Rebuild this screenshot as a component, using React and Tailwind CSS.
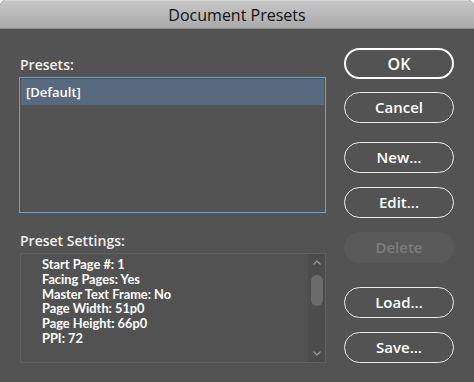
import React from "react";

const font = { fontFamily: '"Open Sans", "Liberation Sans", sans-serif' };
const lato = { fontFamily: 'Lato, "Open Sans", sans-serif' };

function Btn({ children, def, disabled, className = "" }) {
  if (disabled) {
    return (
      <div className={`h-[31px] w-[110px] rounded-full bg-[#595959] flex items-center justify-center text-[15px] font-semibold text-[#7d7d7d] ${className}`}>
        {children}
      </div>
    );
  }
  return (
    <div
      className={`h-[31px] w-[110px] rounded-full flex items-center justify-center text-[15px] font-semibold text-white ${def ? "border-2 border-white" : "border-[1.5px] border-[#ececec]"} ${className}`}
    >
      {children}
    </div>
  );
}

export default function App() {
  const settings = [
    "Start Page #: 1",
    "Facing Pages: Yes",
    "Master Text Frame: No",
    "Page Width: 51p0",
    "Page Height: 66p0",
    "PPI: 72",
  ];
  return (
    <div style={font} className="w-[474px] h-[382px] overflow-hidden bg-[#535353] rounded-t-[6px] flex flex-col">
      <div className="h-[29px] shrink-0 bg-gradient-to-b from-[#c6c6c6] to-[#aaaaaa] border-t border-[#dadada] border-b border-b-[#8e8e8e] flex items-center justify-center text-[16px] text-[#111111]">
        Document Presets
      </div>
      <div className="flex flex-1 pl-[19px] pr-[20px]">
        <div className="w-[307px] flex flex-col">
          <div className="mt-[24px] h-[23px] text-[14px] font-semibold text-[#eeeeee] pl-[1px] leading-[23px]">Presets:</div>
          <div className="mt-[1px] h-[136px] border-[1.5px] border-[#6d9fd6] bg-[#535353] p-[1px]">
            <div className="h-[26px] bg-[#576a80] text-[13px] font-semibold text-white pl-[5px] leading-[26px]">[Default]</div>
          </div>
          <div className="mt-[18px] h-[20px] text-[14px] font-semibold text-[#eeeeee] pl-[1px] leading-[20px]">Preset Settings:</div>
          <div className="mt-[2px] ml-[1px] w-[306px] h-[110px] border border-[#606060] bg-[#525252] flex">
            <div style={lato} className="flex-1 pl-[21px] pt-[3px] text-[12.8px] font-bold text-white leading-[14.8px]">
              {settings.map((s) => (
                <div key={s} className="h-[14.8px]">{s}</div>
              ))}
            </div>
            <div className="w-[17px] bg-[#4c4c4c] flex flex-col items-center justify-between py-[5px]">
              <svg width="10" height="7" viewBox="0 0 10 7"><path d="M1.5 5.5 L5 2 L8.5 5.5" fill="none" stroke="#9a9a9a" strokeWidth="1.2" /></svg>
              <div className="flex-1 w-full flex flex-col items-center pt-[9px]">
                <div className="w-[12px] h-[31px] rounded-full bg-[#6b6b6b]" />
              </div>
              <svg width="10" height="7" viewBox="0 0 10 7"><path d="M1.5 1.5 L5 5 L8.5 1.5" fill="none" stroke="#9a9a9a" strokeWidth="1.2" /></svg>
            </div>
          </div>
        </div>
        <div className="ml-auto w-[110px] flex flex-col pt-[19px]">
          <Btn def className="text-[16px]">OK</Btn>
          <Btn className="mt-[13px]">Cancel</Btn>
          <Btn className="mt-[19px]">New...</Btn>
          <Btn className="mt-[14px]">Edit...</Btn>
          <Btn disabled className="mt-[14px]">Delete</Btn>
          <Btn className="mt-[24px]">Load...</Btn>
          <Btn className="mt-[14px]">Save...</Btn>
        </div>
      </div>
    </div>
  );
}
